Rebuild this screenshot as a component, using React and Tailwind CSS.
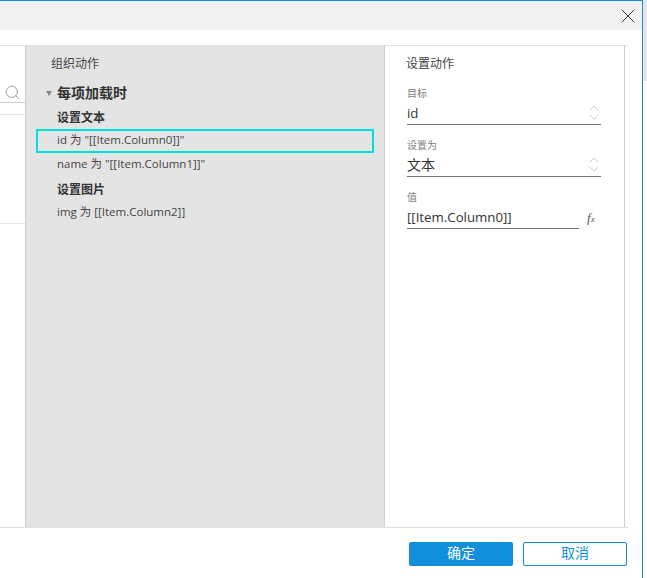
import { Search, ChevronUp, ChevronDown, X } from "lucide-react";

const font = { fontFamily: '"Open Sans", "Noto Sans CJK SC", sans-serif' };

function Field({ label, value, select, mt, valueClass = "text-[13.25px]" }) {
  return (
    <div className={mt}>
      <div className="text-[10px] leading-[13px] text-[#808080]">{label}</div>
      <div className={`flex items-center ${select ? "w-[194px]" : "w-[172px]"} h-[25px] pt-[2px] border-b border-[#777] justify-between`}>
        <span className={`${valueClass} text-[#333] leading-[20px]`}>{value}</span>
        {select && (
          <span className="flex flex-col items-center -mr-[1px] -mt-[2px] text-[#cccccc]">
            <ChevronUp size={16} strokeWidth={1.5} className="-mb-[7px]" />
            <ChevronDown size={16} strokeWidth={1.5} />
          </span>
        )}
      </div>
    </div>
  );
}

export default function App() {
  return (
    <div className="flex w-[647px] h-[578px] bg-white overflow-hidden" style={font}>
      <div className="w-[643px] h-full border-t border-r border-[#0f8fdc] shrink-0 flex flex-col">
        {/* title bar */}
        <div className="h-[29px] bg-[#f2f2f2] flex justify-end items-center pr-[2px] shrink-0">
          <X size={24} strokeWidth={0.9} className="text-[#222]" />
        </div>

        {/* body */}
        <div className="mt-[15px] w-[628px] h-[483px] flex border-y border-[#e0e0e0] shrink-0">
          {/* left list, mostly cut off */}
          <div className="w-[26px] border-r border-[#cfcfcf] shrink-0">
            <div className="mt-[36px] h-[21px] border-b border-[#ccc] flex items-center pl-[4px]">
              <Search size={17} strokeWidth={1} className="text-[#777]" />
            </div>
            <div className="mt-[11px] h-[110px] border-y border-[#e4e4e4]"></div>
          </div>

          {/* organize actions */}
          <div className="w-[358px] bg-[#e4e4e4] shrink-0 pl-[10px] pt-[10px]">
            <div className="pl-[15px] text-[12px] leading-[16px] text-[#444]">组织动作</div>
            <div className="flex items-center mt-[12px] pl-[10px] text-[14px] leading-[18px] font-bold text-[#333]">
              <span className="w-0 h-0 border-x-[3px] border-x-transparent border-t-[5px] border-t-[#888] mr-[5px]"></span>
              每项加载时
            </div>
            <div className="pl-[21px] mt-[8px] text-[12px] leading-[16px] font-bold text-[#333]">设置文本</div>
            <div className="w-[338px] h-[24px] mt-[3px] border-2 border-[#00dfdf] pl-[19px] text-[11.5px] leading-[18px] text-[#444]">
              id 为 "[[Item.Column0]]"
            </div>
            <div className="pl-[21px] mt-[2px] text-[11.5px] leading-[18px] text-[#444]">name 为 "[[Item.Column1]]"</div>
            <div className="pl-[21px] mt-[9px] text-[12px] leading-[16px] font-bold text-[#333]">设置图片</div>
            <div className="pl-[21px] mt-[5px] text-[11.5px] leading-[18px] text-[#444]">img 为 [[Item.Column2]]</div>
          </div>

          {/* set action */}
          <div className="w-[241px] border-x border-[#cfcfcf] shrink-0 pl-[21px] pt-[10px]">
            <div className="text-[12px] leading-[16px] text-[#444]">设置动作</div>
            <div className="pl-[1px]">
              <Field label="目标" value="id" select mt="mt-[15px]" />
              <Field label="设置为" value="文本" select mt="mt-[14px]" valueClass="text-[14px]" />
              <div className="flex items-end">
                <Field label="值" value="[[Item.Column0]]" mt="mt-[14px]" />
                <span className="ml-[8px] mb-[2px] text-[13px] italic leading-[16px] text-[#555]" style={{ fontFamily: '"Liberation Serif", serif' }}>
                  f<span className="text-[9px]">x</span>
                </span>
              </div>
            </div>
          </div>
        </div>

        {/* footer */}
        <div className="flex justify-end gap-[10px] w-[627px] mt-[14px]">
          <button className="w-[104px] h-[24px] bg-[#0f8fdc] rounded-[2px] text-[14px] leading-[20px] pb-[2px] text-white">确定</button>
          <button className="w-[104px] h-[24px] border border-[#0f8fdc] rounded-[2px] text-[14px] leading-[20px] pb-[2px] text-[#0f8fdc]">取消</button>
        </div>
      </div>

      {/* window behind the dialog */}
      <div className="flex-1 h-[81px] bg-[#e6e6e6]"></div>
    </div>
  );
}
